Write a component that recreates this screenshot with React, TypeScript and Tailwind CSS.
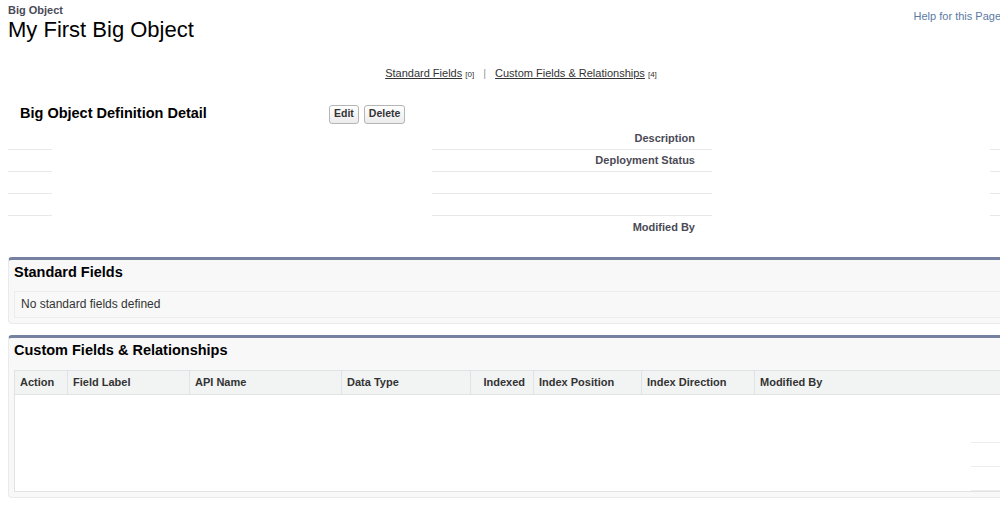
export default function App() {
  const detailRows = [
    { label: 'Description', line: true },
    { label: 'Deployment Status', line: true },
    { label: '', line: true },
    { label: '', line: true },
    { label: 'Modified By', line: false },
  ];

  const columns = [
    { label: 'Action', w: 'w-[53px]', align: 'text-left' },
    { label: 'Field Label', w: 'w-[122px]', align: 'text-left' },
    { label: 'API Name', w: 'w-[152px]', align: 'text-left' },
    { label: 'Data Type', w: 'w-[129px]', align: 'text-left' },
    { label: 'Indexed', w: 'w-[63px]', align: 'text-right' },
    { label: 'Index Position', w: 'w-[108px]', align: 'text-left' },
    { label: 'Index Direction', w: 'w-[113px]', align: 'text-left' },
    { label: 'Modified By', w: 'flex-1', align: 'text-left' },
  ];

  return (
    <div className="w-screen h-[523px] overflow-hidden bg-white font-['Liberation_Sans',Arial,sans-serif] text-[#333]">
      <div className="w-[1042px]">
        {/* Page header */}
        <div className="flex justify-between px-[8px] pt-[4px]">
          <div>
            <div className="text-[11px] font-bold leading-[13px] text-[#4a4a56]">Big Object</div>
            <div className="text-[22px] leading-[26px] text-black">My First Big Object</div>
          </div>
          <div className="pt-[4px] pr-[33px] text-[11px] text-[#5b7aa3]">Help for this Page</div>
        </div>

        {/* Related list links */}
        <div className="mt-[24px] text-center text-[11px] leading-[13px] text-[#333]">
          <span className="underline">Standard Fields</span> <span className="text-[8px]">[0]</span>
          <span className="mx-[9px] text-[#999]">|</span>
          <span className="underline">Custom Fields &amp; Relationships</span> <span className="text-[8px]">[4]</span>
        </div>

        {/* Detail block */}
        <div className="mt-[23px] px-[8px]">
          <div className="flex items-center h-[20px]">
            <div className="w-[321px] pl-[12px] text-[14.5px] font-bold text-black">Big Object Definition Detail</div>
            <div className="flex gap-[5px]">
              <button className="h-[19px] px-[4px] rounded-[3px] border border-[#b5b5b5] bg-gradient-to-b from-white to-[#ececec] text-[10.5px] font-bold text-[#333]">Edit</button>
              <button className="h-[19px] px-[4px] rounded-[3px] border border-[#b5b5b5] bg-gradient-to-b from-white to-[#ececec] text-[10.5px] font-bold text-[#333]">Delete</button>
            </div>
          </div>

          <div className="mt-[4px]">
            {detailRows.map((r, i) => (
              <div key={i} className="flex h-[22px] text-[11px] font-bold text-[#4a4a56]">
                <div className={`w-[44px] ${r.line ? 'border-b border-[#e8e8e8]' : ''}`} />
                <div className="w-[380px]" />
                <div className={`w-[280px] flex items-center justify-end pr-[17px] ${r.line ? 'border-b border-[#e8e8e8]' : ''}`}>
                  {r.label}
                </div>
                <div className="w-[278px]" />
                <div className={`flex-1 ${r.line ? 'border-b border-[#e8e8e8]' : ''}`} />
              </div>
            ))}
          </div>
        </div>

        {/* Standard Fields */}
        <div className="mt-[19px] mx-[8px] rounded-[4px] border border-[#eaeaea] border-t-[3px] border-t-[#7681a1] bg-[#f8f8f8] pb-[5px]">
          <div className="px-[5px] pt-[2px] pb-[7px] text-[14.5px] font-bold text-black">Standard Fields</div>
          <div className="mx-[5px] border border-[#ececec] bg-[#f8f8f8] h-[27px] flex items-center px-[6px] text-[12px] text-[#333]">
            No standard fields defined
          </div>
        </div>

        {/* Custom Fields & Relationships */}
        <div className="mt-[11px] mx-[8px] rounded-[4px] border border-[#eaeaea] border-t-[3px] border-t-[#7681a1] bg-[#f8f8f8] pb-[5px]">
          <div className="px-[5px] pt-[2px] pb-[8px] text-[14.5px] font-bold text-black">Custom Fields &amp; Relationships</div>
          <div className="mx-[5px] border border-[#e0e3e5] bg-white">
            <div className="flex h-[24px] bg-[#f2f3f3] border-b border-[#e0e3e5] text-[11px] font-bold text-[#333]">
              {columns.map((c, i) => (
                <div
                  key={c.label}
                  className={`${c.w} ${c.align} flex items-center ${c.align === 'text-right' ? 'justify-end pr-[8px]' : 'pl-[5px]'} ${i < columns.length - 1 ? 'border-r border-[#e0e3e5]' : ''}`}
                >
                  {c.label}
                </div>
              ))}
            </div>
            <div className="h-[96px] flex flex-col">
              {[0, 1, 2, 3].map((i) => (
                <div key={i} className="h-[24px] flex">
                  <div className="flex-1" />
                  <div className={`w-[56px] ${i > 0 ? 'border-b border-[#ededed]' : ''}`} />
                </div>
              ))}
            </div>
          </div>
        </div>
      </div>
    </div>
  );
}
